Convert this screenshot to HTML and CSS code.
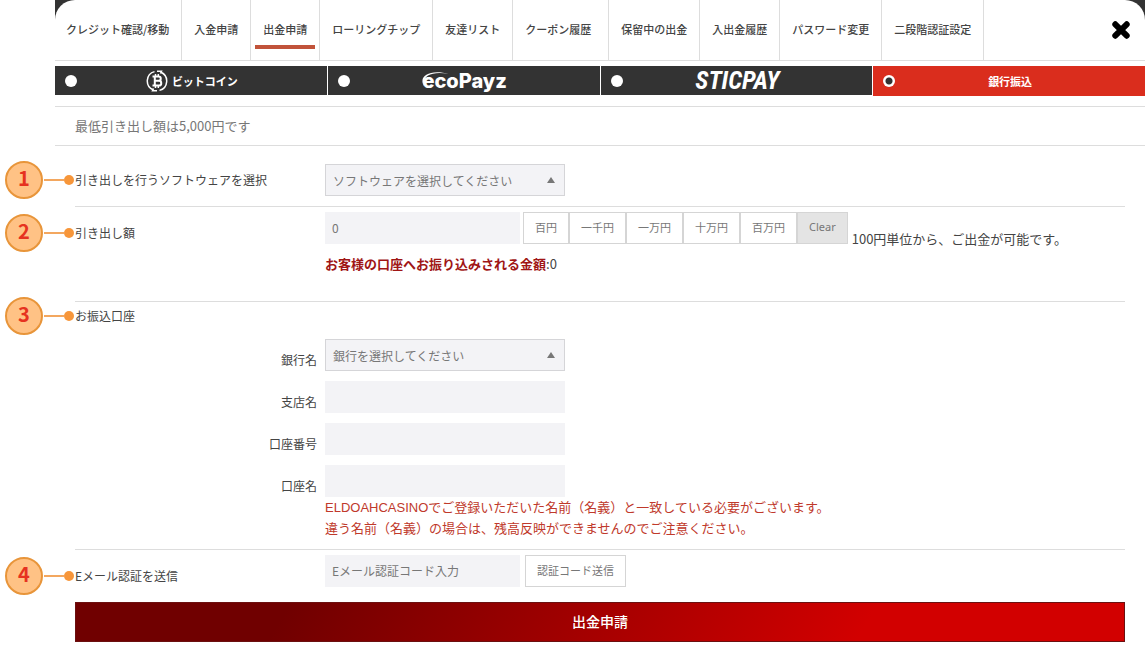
FILE: index.html
```html
<!DOCTYPE html>
<html lang="ja">
<head>
<meta charset="utf-8">
<meta name="viewport" content="width=device-width, initial-scale=1">
<title>出金申請</title>
<link rel="stylesheet" href="styles.css">
</head>
<body>
<div class="backdrop">
<main class="dialog">
  <header class="topbar">
    <nav class="menu">
      <a href="#">クレジット確認/移動</a>
      <a href="#">入金申請</a>
      <a href="#" class="current" aria-current="page">出金申請</a>
      <a href="#">ローリングチップ</a>
      <a href="#">友達リスト</a>
      <a href="#" class="wide">クーポン履歴</a>
      <a href="#">保留中の出金</a>
      <a href="#">入出金履歴</a>
      <a href="#">パスワード変更</a>
      <a href="#">二段階認証設定</a>
    </nav>
    <button type="button" class="close" aria-label="閉じる">
      <svg width="20" height="20" viewBox="0 0 20 20"><path d="M4.3 4.3L15.7 15.7M15.7 4.3L4.3 15.7" stroke="#000" stroke-width="6" stroke-linecap="round"/></svg>
    </button>
  </header>

  <form>
  <div class="methods">
    <label class="method">
      <input type="radio" name="method">
      <span class="method-name">
        <svg width="22" height="22" viewBox="0 0 22 22" fill="none" stroke="#fff" stroke-width="1.5">
          <path d="M8.500 1.600A9.700 9.700 0 0 0 7 19.800M13.500 20.400A9.700 9.700 0 0 0 15 2.200"/>
          <path d="M11 1.200H15.500L14.500 3.500M11 20.800H6.500L7.500 18.500"/>
          <path stroke-width="2" d="M6.500 6.500H12.500C15.500 6.500 15.500 10.800 12.500 10.800H8.500H13C16 10.800 16 15.500 13 15.500H6.500M8.800 6.500V15.500"/>
          <path d="M9.500 4V6.500M12.300 4V6.500M9.500 15.500V18M12.300 15.500V18"/>
        </svg>
        ビットコイン
      </span>
    </label>
    <label class="method">
      <input type="radio" name="method">
      <span class="method-name eco">
        <svg class="swoosh" width="30" height="16" viewBox="0 0 30 16"><path d="M3 15C-3 5 9-2 28 3C12 0 1 4 3 15Z" fill="#fff"/></svg>ecoPayz
      </span>
    </label>
    <label class="method">
      <input type="radio" name="method">
      <span class="method-name stic">STICPAY</span>
    </label>
    <label class="method active">
      <input type="radio" name="method" checked>
      <span class="method-name">銀行振込</span>
    </label>
  </div>

  <p class="notice">最低引き出し額は5,000円です</p>

  <div class="rows">
    <section class="row row-software">
      <label class="title" for="software"><span class="step"><b>1</b></span>引き出しを行うソフトウェアを選択</label>
      <div class="select"><select id="software"><option>ソフトウェアを選択してください</option></select></div>
    </section>

    <section class="row row-amount">
      <label class="title" for="amount"><span class="step"><b>2</b></span>引き出し額</label>
      <div>
        <div class="amount">
          <input id="amount" class="field short" type="text" value="0">
          <div class="presets">
            <button type="button">百円</button><button type="button">一千円</button><button type="button">一万円</button><button type="button">十万円</button><button type="button">百万円</button><button type="button" class="clear">Clear</button>
          </div>
          <span class="hint">100円単位から、ご出金が可能です。</span>
        </div>
        <p class="total"><strong>お客様の口座へお振り込みされる金額</strong>:0</p>
      </div>
    </section>

    <section class="row-account">
      <h2 class="title"><span class="step"><b>3</b></span>お振込口座</h2>
      <div class="account">
        <label for="bank">銀行名</label>
        <div class="select"><select id="bank"><option>銀行を選択してください</option></select></div>
        <label for="branch">支店名</label>
        <input id="branch" class="field" type="text">
        <label for="number">口座番号</label>
        <input id="number" class="field" type="text">
        <label for="holder">口座名</label>
        <input id="holder" class="field" type="text">
      </div>
      <p class="warning">ELDOAHCASINOでご登録いただいた名前（名義）と一致している必要がございます。<br>違う名前（名義）の場合は、残高反映ができませんのでご注意ください。</p>
    </section>

    <section class="row row-email">
      <label class="title" for="code"><span class="step"><b>4</b></span>Eメール認証を送信</label>
      <div class="email">
        <input id="code" class="field short" type="text" placeholder="Eメール認証コード入力">
        <button type="button" class="send">認証コード送信</button>
      </div>
    </section>

    <button type="submit" class="submit">出金申請</button>
  </div>
  </form>
</main>
</div>
</body>
</html>
```

FILE: styles.css
```css
* {
  box-sizing: border-box;
}

body {
  margin: 0;
  background: #fff;
  color: #444;
  font: 13px/20px "Noto Sans CJK JP", sans-serif;
}

input, select, button {
  font-family: inherit;
  border-radius: 0;
}

p, h2 {
  margin: 0;
}

.backdrop {
  margin-left: 55px;
  background: linear-gradient(#333 24px, #fff 24px);
}

.dialog {
  background: #fff;
  border-radius: 20px 20px 0 0;
}

/* Top menu */

.topbar {
  display: flex;
  justify-content: space-between;
  align-items: center;
  padding-right: 14px;
  border-bottom: 1px solid #ddd;
}

.menu {
  display: flex;
}

.menu a {
  position: relative;
  padding: 19px 12px 21px;
  border-right: 1px solid #ddd;
  color: #444;
  font-size: 11px;
  font-weight: 500;
  text-decoration: none;
  white-space: nowrap;
}

.menu a:first-child {
  padding-left: 11px;
}

.menu .wide {
  padding-right: 17px;
}

.menu .current::after {
  content: "";
  position: absolute;
  left: 4px;
  right: 4px;
  bottom: 11px;
  height: 4px;
  background: #c1533a;
}

.close {
  display: flex;
  padding: 0;
  border: 0;
  background: none;
}

/* Payment methods */

.methods {
  display: grid;
  grid-template-columns: repeat(4, 1fr);
  gap: 1px;
  align-items: start;
  height: 40px;
  margin-top: 5px;
}

.method {
  display: flex;
  align-items: center;
  height: 29px;
  padding: 0 20px 0 10px;
  background: #333;
  color: #fff;
  font-size: 11px;
  font-weight: 700;
}

.method.active {
  height: 30px;
  background: #da2d1d;
}

.method input {
  appearance: none;
  width: 12px;
  height: 12px;
  margin: 0;
  border-radius: 50%;
  background: #fff;
}

.method input:checked {
  background: radial-gradient(circle, #333 3px, #fff 4px);
}

.method-name {
  flex: 1;
  display: flex;
  align-items: center;
  justify-content: center;
  gap: 4px;
}

.eco {
  position: relative;
  font: 800 20px/26px Inter, sans-serif;
}

.swoosh {
  position: absolute;
  left: calc(50% - 44px);
  top: 3px;
}

.stic {
  font: italic 700 25px/29px "Roboto Condensed", "Open Sans Condensed", "Liberation Sans Narrow", Roboto, sans-serif;
}

.notice {
  padding: 9px 20px;
  border: solid #ddd;
  border-width: 1px 0;
  color: #777;
}

/* Form rows */

.rows {
  padding: 0 20px 10px;
}

.row {
  display: grid;
  grid-template-columns: 250px 1fr;
}

.row-software {
  padding: 18px 0 10px;
}

.row-amount {
  padding: 5px 0 27px;
  border: solid #ddd;
  border-width: 1px 0;
}

.row-email {
  padding: 5px 0 15px;
  border-top: 1px solid #ddd;
}

.title {
  position: relative;
  align-self: start;
  color: #444;
  font-size: 12px;
  font-weight: 400;
  line-height: 20px;
}

.row-software .title {
  margin-top: 6px;
}

.row-amount .title,
.row-email .title {
  margin-top: 11px;
}

/* Numbered marker joined to its title */

.step {
  position: absolute;
  left: -70px;
  top: -9px;
  display: flex;
  align-items: center;
  width: 69px;
}

.step b {
  width: 38px;
  height: 38px;
  border: 2px solid #e8953a;
  border-radius: 50%;
  background: #ffc285;
  color: #e63220;
  font: 700 20px/30px "Noto Sans CJK JP", sans-serif;
  text-align: center;
}

.step::before {
  content: "";
  order: 1;
  flex: 1;
  height: 2px;
  margin-left: 1px;
  background: #f3a75f;
}

.step::after {
  content: "";
  order: 2;
  width: 10px;
  height: 10px;
  border-radius: 50%;
  background: #f7963a;
}

.select {
  position: relative;
  width: 240px;
}

.select::after {
  content: "";
  position: absolute;
  right: 10px;
  top: 13px;
  border: solid transparent;
  border-width: 0 4px 6px;
  border-bottom-color: #777;
  pointer-events: none;
}

select {
  appearance: none;
  display: block;
  width: 100%;
  height: 32px;
  padding: 0 7px;
  border: 1px solid #d5d5d8;
  background: #f3f3f6;
  color: #777;
  font-size: 12px;
}

.field {
  width: 240px;
  height: 32px;
  padding: 0 7px 2px;
  border: 0;
  background: #f3f3f6;
  color: #777;
  font-size: 12px;
}

.field.short {
  width: 195px;
}

.field::placeholder {
  color: #777;
}

.amount {
  display: flex;
  align-items: flex-start;
}

.presets {
  display: flex;
  margin: 0 4px 0 3px;
}

.presets button,
.send {
  height: 32px;
  padding: 0 11px 3px;
  border: 1px solid #d5d5d5;
  background: #fff;
  color: #777;
  font-size: 11px;
  line-height: 26px;
  white-space: nowrap;
}

.presets .clear {
  background: #e4e4e4;
  font-family: "Noto Sans", sans-serif;
}

.hint {
  padding-top: 17px;
}

.total {
  margin-top: 5px;
}

.total strong {
  color: #a01515;
  font-weight: 700;
}

.row-account {
  padding: 4px 0 10px;
}

.account {
  display: grid;
  grid-template-columns: 242px 240px;
  gap: 10px 8px;
  margin-top: 13px;
}

.account label {
  padding-top: 10px;
  font-size: 12px;
  line-height: 22px;
  text-align: right;
}

.warning {
  margin-left: 250px;
  color: #c0392b;
  font-family: "Liberation Sans", "Noto Sans CJK JP", sans-serif;
  line-height: 21px;
}

.email {
  display: flex;
  gap: 5px;
}

.submit {
  display: block;
  width: 100%;
  height: 40px;
  padding: 0 0 3px;
  border: 1px solid #6b1010;
  background: linear-gradient(120deg, #700000 20%, #d20000 75%);
  color: #fff;
  font-size: 14px;
  font-weight: 500;
}
```
